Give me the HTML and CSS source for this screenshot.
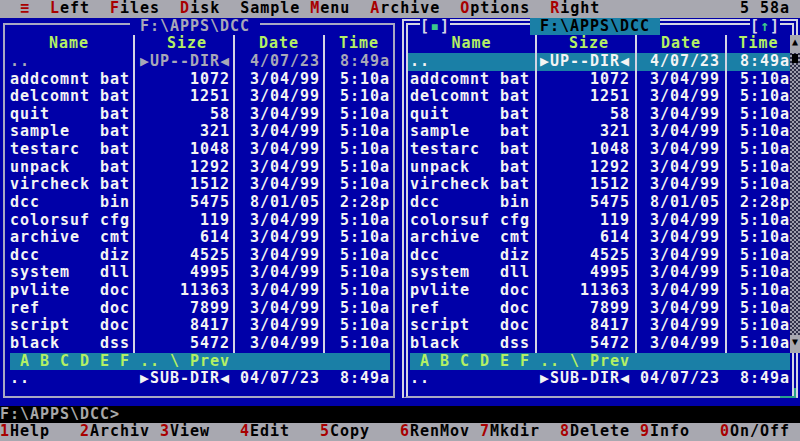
FILE: index.html
```html
<!DOCTYPE html>
<html lang="en">
<head>
  <meta charset="UTF-8" />
  <meta name="viewport" content="width=device-width, initial-scale=1.0"/>
  <title>DCC - F:\APPS\DCC</title>
  <link rel="stylesheet" href="styles.css">
</head>
<body>
  <div class="screen">
    <div class="menubar">
      <span>  <b>≡</b>  <b>L</b>eft  <b>F</b>iles  <b>D</b>isk  Sample <b>M</b>enu  <b>A</b>rchive  <b>O</b>ptions  <b>R</b>ight</span>
      <span class="clock">5 58a</span>
    </div>

    <div class="panels">
      <div class="panel left">
        <span class="title">F:\APPS\DCC</span>
        <div class="row head"><span>Name</span><span>Size</span><span>Date</span><span>Time</span></div>
        <div class="row updir"><span>..</span><span>▶UP--DIR◀</span><span>4/07/23</span><span>8:49a</span></div>
        <div class="row"><span>addcomnt bat</span><span>1072</span><span>3/04/99</span><span>5:10a</span></div>
        <div class="row"><span>delcomnt bat</span><span>1251</span><span>3/04/99</span><span>5:10a</span></div>
        <div class="row"><span>quit     bat</span><span>58</span><span>3/04/99</span><span>5:10a</span></div>
        <div class="row"><span>sample   bat</span><span>321</span><span>3/04/99</span><span>5:10a</span></div>
        <div class="row"><span>testarc  bat</span><span>1048</span><span>3/04/99</span><span>5:10a</span></div>
        <div class="row"><span>unpack   bat</span><span>1292</span><span>3/04/99</span><span>5:10a</span></div>
        <div class="row"><span>vircheck bat</span><span>1512</span><span>3/04/99</span><span>5:10a</span></div>
        <div class="row"><span>dcc      bin</span><span>5475</span><span>8/01/05</span><span>2:28p</span></div>
        <div class="row"><span>colorsuf cfg</span><span>119</span><span>3/04/99</span><span>5:10a</span></div>
        <div class="row"><span>archive  cmt</span><span>614</span><span>3/04/99</span><span>5:10a</span></div>
        <div class="row"><span>dcc      diz</span><span>4525</span><span>3/04/99</span><span>5:10a</span></div>
        <div class="row"><span>system   dll</span><span>4995</span><span>3/04/99</span><span>5:10a</span></div>
        <div class="row"><span>pvlite   doc</span><span>11363</span><span>3/04/99</span><span>5:10a</span></div>
        <div class="row"><span>ref      doc</span><span>7899</span><span>3/04/99</span><span>5:10a</span></div>
        <div class="row"><span>script   doc</span><span>8417</span><span>3/04/99</span><span>5:10a</span></div>
        <div class="row"><span>black    dss</span><span>5472</span><span>3/04/99</span><span>5:10a</span></div>
        <div class="bar">A B C D E F .. \ Prev</div>
        <div class="row info"><span>..</span><span>▶SUB-DIR◀</span><span>04/07/23</span><span>8:49a</span></div>
      </div>

      <div class="panel right">
        <span class="mark mark-left">[<i>▪</i>]</span>
        <span class="title">F:\APPS\DCC</span>
        <span class="mark mark-right">[<i>↑</i>]</span>
        <div class="row head"><span>Name</span><span>Size</span><span>Date</span><span>Time</span></div>
        <div class="row cursor"><span>..</span><span>▶UP--DIR◀</span><span>4/07/23</span><span>8:49a</span></div>
        <div class="row"><span>addcomnt bat</span><span>1072</span><span>3/04/99</span><span>5:10a</span></div>
        <div class="row"><span>delcomnt bat</span><span>1251</span><span>3/04/99</span><span>5:10a</span></div>
        <div class="row"><span>quit     bat</span><span>58</span><span>3/04/99</span><span>5:10a</span></div>
        <div class="row"><span>sample   bat</span><span>321</span><span>3/04/99</span><span>5:10a</span></div>
        <div class="row"><span>testarc  bat</span><span>1048</span><span>3/04/99</span><span>5:10a</span></div>
        <div class="row"><span>unpack   bat</span><span>1292</span><span>3/04/99</span><span>5:10a</span></div>
        <div class="row"><span>vircheck bat</span><span>1512</span><span>3/04/99</span><span>5:10a</span></div>
        <div class="row"><span>dcc      bin</span><span>5475</span><span>8/01/05</span><span>2:28p</span></div>
        <div class="row"><span>colorsuf cfg</span><span>119</span><span>3/04/99</span><span>5:10a</span></div>
        <div class="row"><span>archive  cmt</span><span>614</span><span>3/04/99</span><span>5:10a</span></div>
        <div class="row"><span>dcc      diz</span><span>4525</span><span>3/04/99</span><span>5:10a</span></div>
        <div class="row"><span>system   dll</span><span>4995</span><span>3/04/99</span><span>5:10a</span></div>
        <div class="row"><span>pvlite   doc</span><span>11363</span><span>3/04/99</span><span>5:10a</span></div>
        <div class="row"><span>ref      doc</span><span>7899</span><span>3/04/99</span><span>5:10a</span></div>
        <div class="row"><span>script   doc</span><span>8417</span><span>3/04/99</span><span>5:10a</span></div>
        <div class="row"><span>black    dss</span><span>5472</span><span>3/04/99</span><span>5:10a</span></div>
        <div class="bar">A B C D E F .. \ Prev</div>
        <div class="row info"><span>..</span><span>▶SUB-DIR◀</span><span>04/07/23</span><span>8:49a</span></div>

        <div class="scroll">
          <span class="arrow">▲</span>
          <div class="track"><span class="thumb"></span></div>
          <span class="arrow">▼</span>
        </div>
        <span class="corner"></span>
      </div>
    </div>

    <div class="cmdline">F:\APPS\DCC&gt;</div>

    <div class="keybar">
      <span class="key"><b>1</b>Help</span>
      <span class="key"><b>2</b>Archiv</span>
      <span class="key"><b>3</b>View</span>
      <span class="key"><b>4</b>Edit</span>
      <span class="key"><b>5</b>Copy</span>
      <span class="key"><b>6</b>RenMov</span>
      <span class="key"><b>7</b>Mkdir</span>
      <span class="key"><b>8</b>Delete</span>
      <span class="key"><b>9</b>Info</span>
      <span class="key"><b>0</b>On/Off</span>
    </div>
  </div>
</body>
</html>
```

FILE: styles.css
```css
body {
  margin: 0;
  background: #000;
}

.screen {
  width: 800px;
  height: 441px;
  overflow: hidden;
  display: flex;
  flex-direction: column;
  background: #000;
  font-family: "DejaVu Sans Mono", monospace;
  font-size: 15px;
  font-weight: bold;
  letter-spacing: 0.97px;
  line-height: 17px;
}

.screen b {
  font-weight: bold;
  color: #a80000;
}

/* text cells keep their padding spaces */
.menubar span,
.row span,
.bar,
.title,
.mark,
.cmdline,
.key {
  white-space: pre;
}

/* top menu */
.menubar {
  height: 17.64px;
  flex: none;
  display: flex;
  justify-content: space-between;
  background: #a8a8b0;
  color: #000;
}

.clock {
  padding-right: 10px;
}

/* panels */
.panels {
  height: 388.08px;
  flex: none;
  display: flex;
  background: #0000a8;
}

.panel {
  position: relative;
  box-sizing: border-box;
  padding-top: 10.28px;
  color: #f4f4f4;
}

.panel.left {
  --cols: 128px 100px 90px 70px;
  --npad: 5px;
  --pad: 3px;
  --tpad: 3px;
  --bar-ml: 5px;
  --bar-mr: 3px;
  width: 392px;
  height: 375px;
  margin: 5.36px 7px 0 3px;
  border: 2px solid #a8a8c4;
}

.panel.right {
  --cols: 127px 100px 90px 65px;
  --npad: 2px;
  --pad: 5px;
  --tpad: 0px;
  --bar-ml: 2px;
  --bar-mr: 0px;
  width: 396px;
  height: 379px;
  margin: 1.36px 2px 0 0;
  padding-right: 2px;
  border: 6px double #d4d4e4;
  border-bottom: 2px solid #a8a8c4;
}

.row {
  display: grid;
  grid-template-columns: var(--cols);
  height: 17.64px;
}

.row span {
  box-sizing: border-box;
  text-align: right;
  padding-right: var(--pad);
}

.row span + span {
  border-left: 2px solid #d4d4e4;
}

.row span:first-child {
  text-align: left;
  padding-left: var(--npad);
  padding-right: 0;
}

.row span:last-child {
  padding-right: var(--tpad);
}

.row.head span {
  text-align: center;
  padding: 0;
  color: #b4f064;
}

.row.head span:nth-child(2) {
  padding-left: 6px;
}

.row.updir {
  color: #a8a8b8;
}

.row.cursor {
  background: #1a7fa6;
}

.row.info span {
  border-color: transparent;
}

.bar {
  height: 17.64px;
  margin: 0 var(--bar-mr) 0 var(--bar-ml);
  padding-left: 10px;
  background: #1a7fa6;
  color: #b4f064;
}

/* frame titles */
.title {
  position: absolute;
  top: -7.36px;
  height: 17.64px;
  padding: 0 10px;
}

.left .title {
  left: 125px;
  background: #0000a8;
  color: #a8a8b8;
}

.right .title {
  left: 122px;
  background: #1a7fa6;
  color: #000;
}

.mark {
  position: absolute;
  top: -7.36px;
  height: 17.64px;
  background: #0000a8;
  color: #d4d4e4;
}

.mark i {
  font-style: normal;
  color: #3cc88c;
}

.mark-left {
  left: 12px;
}

.mark-right {
  left: 342px;
}

/* scrollbar */
.scroll {
  position: absolute;
  left: 382px;
  top: 10.28px;
  width: 10px;
  height: 317.52px;
  display: flex;
  flex-direction: column;
}

.arrow {
  height: 17.64px;
  flex: none;
  background: #a8a8b0;
  color: #000;
  font-size: 10px;
  letter-spacing: 0;
  line-height: 14px;
  text-align: center;
}

.track {
  flex: 1;
  background: repeating-conic-gradient(#9c9cac 0 25%, #30304a 0 50%) 0 0 / 4px 4px;
}

.thumb {
  display: block;
  width: 6px;
  height: 9px;
  margin: 1px 0 0 2px;
  background: #000;
}

.corner {
  position: absolute;
  right: -4px;
  bottom: -2px;
  width: 14px;
  height: 8px;
  border-right: 2px solid #2aa08c;
  border-bottom: 2px solid #2aa08c;
}

/* bottom lines */
.cmdline {
  height: 17.64px;
  flex: none;
  color: #a8a8a8;
}

.keybar {
  height: 17.64px;
  flex: none;
  display: flex;
  background: #a8a8b0;
  color: #000;
}

.key {
  width: 80px;
}
```
